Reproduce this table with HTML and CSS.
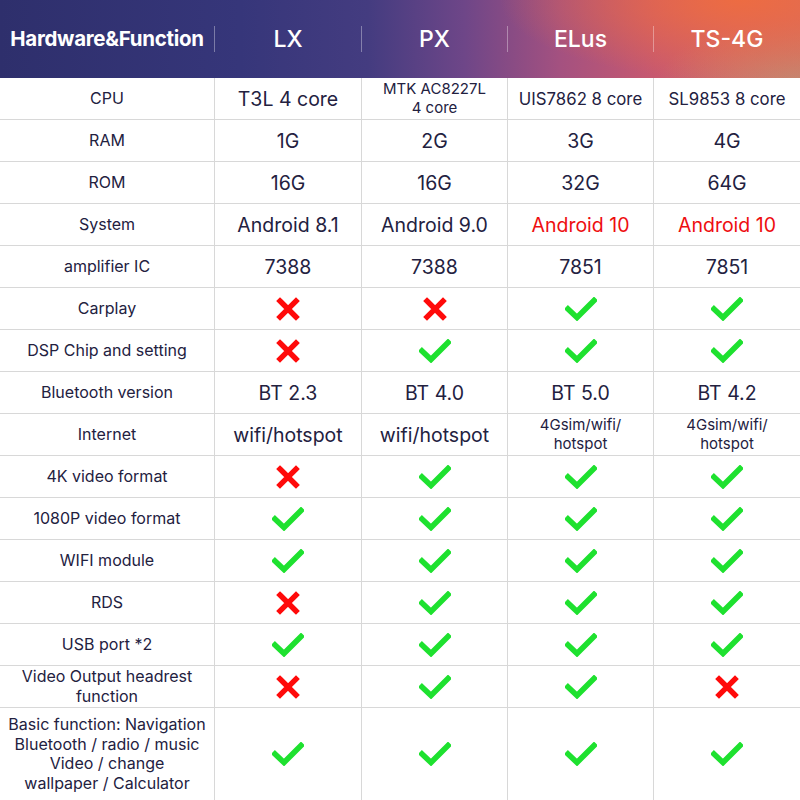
FILE: index.html
```html
<!DOCTYPE html>
<html>
<head>
<meta charset="utf-8">
<link rel="stylesheet" href="styles.css">
</head>
<body>
<svg width="0" height="0" class="defs">
  <defs>
    <symbol id="yes" viewBox="0 0 32 24">
      <path d="M3 12 L12 20.5 L29 3.5" fill="none" stroke="#1ee12f" stroke-width="5.6" stroke-linecap="square" stroke-linejoin="miter"/>
    </symbol>
    <symbol id="no" viewBox="0 0 24 24">
      <path d="M4 4 L20 20 M20 4 L4 20" fill="none" stroke="#ff0a0a" stroke-width="5.4" stroke-linecap="square"/>
    </symbol>
  </defs>
</svg>
<div class="table">
  <div class="head">
    <div class="hcell first">Hardware&amp;Function</div>
    <div class="hcell">LX</div>
    <div class="hcell">PX</div>
    <div class="hcell">ELus</div>
    <div class="hcell last">TS-4G</div>
  </div>

  <div class="row">
    <div class="cell label">CPU</div>
    <div class="cell val">T3L 4 core</div>
    <div class="cell small">MTK AC8227L<br>4 core</div>
    <div class="cell mid">UIS7862 8 core</div>
    <div class="cell mid">SL9853 8 core</div>
  </div>
  <div class="row">
    <div class="cell label">RAM</div>
    <div class="cell val">1G</div>
    <div class="cell val">2G</div>
    <div class="cell val">3G</div>
    <div class="cell val">4G</div>
  </div>
  <div class="row">
    <div class="cell label">ROM</div>
    <div class="cell val">16G</div>
    <div class="cell val">16G</div>
    <div class="cell val">32G</div>
    <div class="cell val">64G</div>
  </div>
  <div class="row">
    <div class="cell label">System</div>
    <div class="cell val">Android 8.1</div>
    <div class="cell val">Android 9.0</div>
    <div class="cell val red">Android 10</div>
    <div class="cell val red">Android 10</div>
  </div>
  <div class="row">
    <div class="cell label">amplifier IC</div>
    <div class="cell val">7388</div>
    <div class="cell val">7388</div>
    <div class="cell val">7851</div>
    <div class="cell val">7851</div>
  </div>
  <div class="row">
    <div class="cell label">Carplay</div>
    <div class="cell"><svg class="ic-no"><use href="#no"/></svg></div>
    <div class="cell"><svg class="ic-no"><use href="#no"/></svg></div>
    <div class="cell"><svg class="ic-yes"><use href="#yes"/></svg></div>
    <div class="cell"><svg class="ic-yes"><use href="#yes"/></svg></div>
  </div>
  <div class="row">
    <div class="cell label">DSP Chip and setting</div>
    <div class="cell"><svg class="ic-no"><use href="#no"/></svg></div>
    <div class="cell"><svg class="ic-yes"><use href="#yes"/></svg></div>
    <div class="cell"><svg class="ic-yes"><use href="#yes"/></svg></div>
    <div class="cell"><svg class="ic-yes"><use href="#yes"/></svg></div>
  </div>
  <div class="row">
    <div class="cell label">Bluetooth version</div>
    <div class="cell val">BT 2.3</div>
    <div class="cell val">BT 4.0</div>
    <div class="cell val">BT 5.0</div>
    <div class="cell val">BT 4.2</div>
  </div>
  <div class="row">
    <div class="cell label">Internet</div>
    <div class="cell val">wifi/hotspot</div>
    <div class="cell val">wifi/hotspot</div>
    <div class="cell small">4Gsim/wifi/<br>hotspot</div>
    <div class="cell small">4Gsim/wifi/<br>hotspot</div>
  </div>
  <div class="row">
    <div class="cell label">4K video format</div>
    <div class="cell"><svg class="ic-no"><use href="#no"/></svg></div>
    <div class="cell"><svg class="ic-yes"><use href="#yes"/></svg></div>
    <div class="cell"><svg class="ic-yes"><use href="#yes"/></svg></div>
    <div class="cell"><svg class="ic-yes"><use href="#yes"/></svg></div>
  </div>
  <div class="row">
    <div class="cell label">1080P video format</div>
    <div class="cell"><svg class="ic-yes"><use href="#yes"/></svg></div>
    <div class="cell"><svg class="ic-yes"><use href="#yes"/></svg></div>
    <div class="cell"><svg class="ic-yes"><use href="#yes"/></svg></div>
    <div class="cell"><svg class="ic-yes"><use href="#yes"/></svg></div>
  </div>
  <div class="row">
    <div class="cell label">WIFI module</div>
    <div class="cell"><svg class="ic-yes"><use href="#yes"/></svg></div>
    <div class="cell"><svg class="ic-yes"><use href="#yes"/></svg></div>
    <div class="cell"><svg class="ic-yes"><use href="#yes"/></svg></div>
    <div class="cell"><svg class="ic-yes"><use href="#yes"/></svg></div>
  </div>
  <div class="row">
    <div class="cell label">RDS</div>
    <div class="cell"><svg class="ic-no"><use href="#no"/></svg></div>
    <div class="cell"><svg class="ic-yes"><use href="#yes"/></svg></div>
    <div class="cell"><svg class="ic-yes"><use href="#yes"/></svg></div>
    <div class="cell"><svg class="ic-yes"><use href="#yes"/></svg></div>
  </div>
  <div class="row">
    <div class="cell label">USB port *2</div>
    <div class="cell"><svg class="ic-yes"><use href="#yes"/></svg></div>
    <div class="cell"><svg class="ic-yes"><use href="#yes"/></svg></div>
    <div class="cell"><svg class="ic-yes"><use href="#yes"/></svg></div>
    <div class="cell"><svg class="ic-yes"><use href="#yes"/></svg></div>
  </div>
  <div class="row">
    <div class="cell label">Video Output headrest<br>function</div>
    <div class="cell"><svg class="ic-no"><use href="#no"/></svg></div>
    <div class="cell"><svg class="ic-yes"><use href="#yes"/></svg></div>
    <div class="cell"><svg class="ic-yes"><use href="#yes"/></svg></div>
    <div class="cell"><svg class="ic-no"><use href="#no"/></svg></div>
  </div>
  <div class="row tall">
    <div class="cell label">Basic function: Navigation<br>Bluetooth / radio / music<br>Video / change<br>wallpaper / Calculator</div>
    <div class="cell"><svg class="ic-yes"><use href="#yes"/></svg></div>
    <div class="cell"><svg class="ic-yes"><use href="#yes"/></svg></div>
    <div class="cell"><svg class="ic-yes"><use href="#yes"/></svg></div>
    <div class="cell"><svg class="ic-yes"><use href="#yes"/></svg></div>
  </div>
</div>
</body>
</html>
```

FILE: styles.css
```css
html, body {
  margin: 0;
  padding: 0;
  background: #ffffff;
}
.defs {
  position: absolute;
  width: 0;
  height: 0;
  overflow: hidden;
}
.table {
  width: 800px;
  height: 800px;
  font-family: Inter, "Noto Sans", sans-serif;
  color: #23213f;
  overflow: hidden;
}
.head {
  display: grid;
  grid-template-columns: 215px 147px 146px 146px 146px;
  height: 78px;
  align-items: center;
  background:
    radial-gradient(ellipse 240px 80px at 740px 0px, rgba(238,108,64,0.95) 0%, rgba(238,108,64,0) 100%),
    radial-gradient(ellipse 140px 60px at 800px 80px, rgba(196,138,112,0.85) 0%, rgba(196,138,112,0) 100%),
    linear-gradient(90deg, #2e2f6c 0%, #36367a 30%, #443c80 46%, #6e4688 58%, #a45180 70%, #c8596f 82%, #d56466 92%, #d46a66 100%);
}
.hcell {
  color: #ffffff;
  text-align: center;
  font-size: 23px;
  font-weight: 500;
  height: 26px;
  line-height: 26px;
  border-right: 1px solid rgba(255,255,255,0.35);
}
.hcell.first {
  font-size: 20.5px;
  font-weight: 700;
  letter-spacing: -0.3px;
}
.hcell.last {
  border-right: none;
}
.row {
  display: grid;
  grid-template-columns: 215px 147px 146px 146px 146px;
  height: 42px;
}
.row.tall {
  height: 92px;
}
.cell {
  display: flex;
  align-items: center;
  justify-content: center;
  text-align: center;
  border-right: 1px solid #d8d8d8;
  border-bottom: 1px solid #d8d8d8;
  box-sizing: border-box;
}
.row .cell:last-child {
  border-right: none;
}
.row.tall .cell {
  border-bottom: none;
}
.label {
  font-size: 16px;
  line-height: 19.5px;
}
.val {
  font-size: 19.5px;
}
.mid {
  font-size: 16.8px;
}
.small {
  font-size: 15px;
  line-height: 18.2px;
}
.red {
  color: #ee0e10;
}
.ic-yes {
  width: 32px;
  height: 24px;
}
.ic-no {
  width: 24px;
  height: 24px;
}
```
